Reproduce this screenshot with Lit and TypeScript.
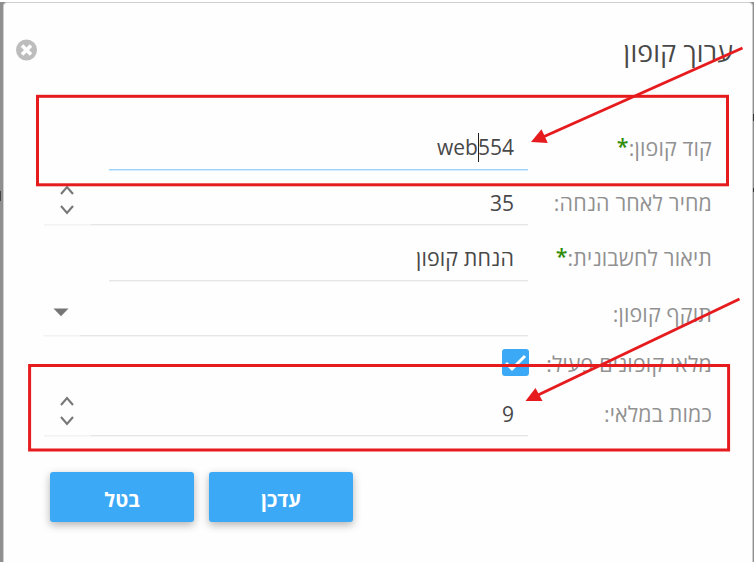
import { LitElement, html, css, svg, nothing } from "lit";
import { customElement, property } from "lit/decorators.js";

type Kind = "text" | "number" | "select" | "check";

@customElement("coupon-field")
class CouponField extends LitElement {
  @property() label = "";
  @property() value = "";
  @property() kind: Kind = "text";
  @property({ type: Boolean }) required = false;
  @property({ type: Boolean }) focused = false;

  static styles = css`
    :host {
      display: flex;
      box-sizing: border-box;
      color: #484848;
      font-size: 21px;
    }
    .label {
      width: 185px;
      flex: none;
      box-sizing: border-box;
      color: #919191;
      font-size: 21.4px;
      letter-spacing: 0.16px;
      line-height: 30px;
      white-space: nowrap;
      padding: 17px 1px 0 0;
    }
    .check-label {
      padding-top: 12px;
    }
    .star {
      display: inline-block;
      color: #2f8d08;
      font-weight: 600;
      line-height: 20px;
      vertical-align: 2px;
    }
    .input {
      box-sizing: border-box;
      width: 419px;
      margin-bottom: 1px;
      padding: 17px 14px 0 0;
      line-height: 30px;
      border-bottom: 1px solid #e6e6e6;
      box-shadow: 0 1px #f5f5f5;
      white-space: nowrap;
    }
    .phrase {
      font-size: 21.4px;
      letter-spacing: 0.12px;
    }
    .number {
      width: 437px;
    }
    .select {
      width: 448px;
    }
    .focused {
      padding-top: 16px;
      border-color: #9bd3fa;
      box-shadow: 0 1px #d3ebfc;
    }
    .caret {
      display: inline-block;
      width: 1px;
      height: 29px;
      margin: 0 -1px 0 0;
      background: #222;
      vertical-align: -7px;
    }
    .side {
      box-sizing: border-box;
      width: 47px;
      margin-bottom: 1px;
      border-bottom: 1px solid #f3f3f3;
      box-shadow: 0 1px #f8f8f8;
      display: flex;
      flex-direction: column;
      align-items: center;
      padding: 14px 1px 0 0;
    }
    .side.narrow {
      width: 37px;
      padding: 26px 2px 0 0;
    }
    .box {
      width: 27px;
      height: 27px;
      margin: 12px -1px 0 0;
      border-radius: 3px;
      background: #3ba9f5;
    }
    svg {
      display: block;
    }
  `;

  private control() {
    if (this.kind === "check") {
      return html`<div class="box">
        <svg width="27" height="27" viewBox="0 0 27 27">
          <path d="M4 14 L10 20 L23 7" fill="none" stroke="#fff" stroke-width="3" />
        </svg>
      </div>`;
    }
    const text = this.focused
      ? html`<bdi dir="ltr">web<span class="caret"></span>554</bdi>`
      : html`<span class=${this.kind === "text" ? "phrase" : ""}>${this.value}</span>`;
    return html`
      <div class="input ${this.kind} ${this.focused ? "focused" : ""}">${text}</div>
      ${this.kind === "number"
        ? html`<div class="side">
            <svg width="14" height="30" viewBox="0 0 14 30" fill="none" stroke="#777" stroke-width="2.1">
              <path d="M1 9 L7 2 L13 9 M1 21 L7 28 L13 21" />
            </svg>
          </div>`
        : nothing}
      ${this.kind === "select"
        ? html`<div class="side narrow">
            <svg width="16" height="9" viewBox="0 0 16 9"><path d="M0.5 0.5 H15.5 L8 8.2 Z" fill="#757575" /></svg>
          </div>`
        : nothing}
    `;
  }

  render() {
    return html`
      <div class="label ${this.kind === "check" ? "check-label" : ""}">${this.label}:${this.required
          ? html`<span class="star">*</span>`
          : nothing}</div>
      ${this.control()}
    `;
  }
}

const arrow = (x1: number, y1: number, x2: number, y2: number, head: string) => svg`
  <line x1=${x1} y1=${y1} x2=${x2} y2=${y2} />
  <polygon points=${head} fill="#e61b1e" stroke="none" />`;

@customElement("app-root")
class AppRoot extends LitElement {
  static styles = css`
    :host {
      display: block;
      position: relative;
      box-sizing: border-box;
      width: 754px;
      height: 562px;
      overflow: hidden;
      padding: 2px 1px 0 3px;
      background: linear-gradient(#fff 2px, #8f8f8f 2px);
      font-family: "Open Sans", "Noto Sans", sans-serif;
    }
    .dialog {
      box-sizing: border-box;
      height: 562px;
      border: 1px solid #cfcfcf;
      border-radius: 4px 4px 0 0;
      background: #fefefe;
      direction: rtl;
    }
    .head {
      display: flex;
      justify-content: space-between;
      height: 113px;
      box-sizing: border-box;
      padding: 28px 19px 0 11px;
    }
    h1 {
      margin: 1px 0 0;
      font-size: 26.6px;
      letter-spacing: 0.2px;
      line-height: 40px;
      font-weight: 400;
      color: #484848;
    }
    .close {
      margin-top: 8px;
    }
    .form {
      display: grid;
      grid-template-rows: 55px 55px 56px 55px 45px 55px;
      padding-right: 39px;
    }
    .actions {
      display: flex;
      gap: 15px;
      justify-content: flex-end;
      padding: 35px 0 0 46px;
    }
    button {
      width: 144px;
      height: 50px;
      padding: 5px 0 0;
      border: 0;
      border-radius: 3px;
      background: #3ba9f5;
      color: #fff;
      font: 700 20px "Open Sans", "Noto Sans", sans-serif;
      box-shadow: 0 3px 9px rgba(0, 0, 0, 0.3);
    }
    .marks {
      position: absolute;
      inset: 0;
    }
  `;

  render() {
    return html`
      <div class="dialog">
        <div class="head">
          <h1>ערוך קופון</h1>
          <svg class="close" width="22" height="22" viewBox="0 0 22 22">
            <circle cx="11.5" cy="11" r="10.5" fill="#bdbdbd" />
            <path d="M7 6.5 L16 15.5 M16 6.5 L7 15.5" stroke="#fff" stroke-width="3.6" />
          </svg>
        </div>
        <div class="form">
          <coupon-field label="קוד קופון" required focused></coupon-field>
          <coupon-field label="מחיר לאחר הנחה" kind="number" value="35"></coupon-field>
          <coupon-field label="תיאור לחשבונית" required value="הנחת קופון"></coupon-field>
          <coupon-field label="תוקף קופון" kind="select"></coupon-field>
          <coupon-field label="מלאי קופונים פעיל" kind="check"></coupon-field>
          <coupon-field label="כמות במלאי" kind="number" value="9"></coupon-field>
        </div>
        <div class="actions">
          <button>עדכן</button>
          <button>בטל</button>
        </div>
      </div>
      <svg class="marks" width="754" height="562" viewBox="0 0 754 562" fill="none" stroke="#e61b1e" stroke-width="3">
        <rect x="37.5" y="96.3" width="690" height="88.5" />
        <rect x="29.6" y="365.5" width="699" height="84.5" />
        ${arrow(742.5, 48, 543, 137, "531,142 541.5,129.3 547.8,143")}
        ${arrow(739.5, 299, 537, 395.5, "525.5,401 535.5,388 542.5,401")}
        <path d="M0 191 V201" stroke="#444" stroke-width="2" />
        <path d="M753.5 114 V121 M753.5 188 V192" stroke="#333" stroke-width="1" />
      </svg>
    `;
  }
}
